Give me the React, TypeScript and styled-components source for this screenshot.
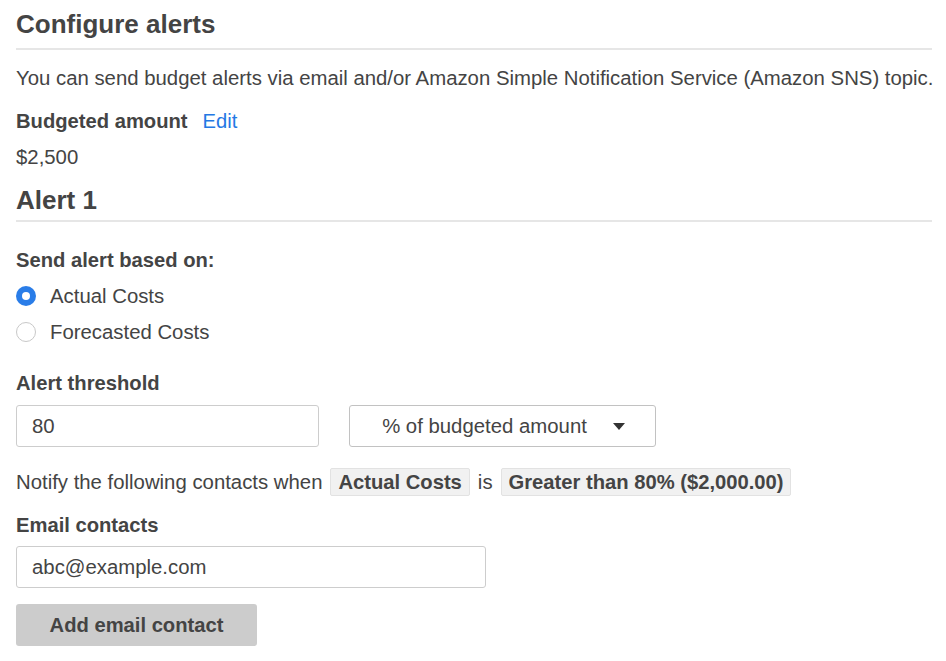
import React from "react";
import styled, { createGlobalStyle } from "styled-components";

const Global = createGlobalStyle`
  html, body { margin: 0; padding: 0; background: #fff; }
  body { font-family: "Liberation Sans", Arial, Helvetica, sans-serif; color: #444; }
  * { box-sizing: border-box; }
`;

const Page = styled.div`
  width: 946px;
  padding: 0 14px 0 16px;
  display: flex;
  flex-direction: column;
`;

const Heading = styled.h1<{ $h: number; $mt: number }>`
  margin: ${(p) => p.$mt}px 0 0;
  font-size: 26px;
  font-weight: 700;
  line-height: ${(p) => p.$h}px;
  height: ${(p) => p.$h + 2}px;
  border-bottom: 2px solid #e6e6e6;
  color: #444;
`;

const Text = styled.div<{ $mt?: number; $bold?: boolean }>`
  margin-top: ${(p) => p.$mt ?? 0}px;
  font-size: ${(p) => (p.$bold ? "20.2px" : "20.35px")};
  line-height: 36px;
  height: 36px;
  font-weight: ${(p) => (p.$bold ? 700 : 400)};
  display: flex;
  align-items: center;
  white-space: nowrap;
`;

const Link = styled.a`
  color: #2478e4;
  font-weight: 400;
  margin-left: 15px;
  text-decoration: none;
`;

const RadioRow = styled.label`
  display: flex;
  align-items: center;
  height: 36px;
  font-size: 20.35px;
  gap: 14px;
`;

const RadioDot = styled.span<{ $on?: boolean }>`
  width: 20px;
  height: 20px;
  border-radius: 50%;
  flex: none;
  position: relative;
  ${(p) =>
    p.$on
      ? `background: #2a7de8;
         &::after { content: ""; position: absolute; left: 6px; top: 6px; width: 8px; height: 8px; border-radius: 50%; background: #fff; }`
      : `border: 1.5px solid #c8c8c8; background: #fff;`}
`;

const Row = styled.div<{ $mt: number; $gap?: number }>`
  display: flex;
  margin-top: ${(p) => p.$mt}px;
  gap: ${(p) => p.$gap ?? 0}px;
`;

const Input = styled.div<{ $w: number }>`
  width: ${(p) => p.$w}px;
  height: 42px;
  border: 1px solid #cdcdcd;
  border-radius: 3px;
  padding-left: 15px;
  font-size: 20.35px;
  display: flex;
  align-items: center;
  color: #444;
`;

const Select = styled.div`
  width: 307px;
  height: 42px;
  border: 1px solid #c2c2c2;
  border-radius: 3px;
  font-size: 20.35px;
  display: flex;
  align-items: center;
  justify-content: center;
  gap: 26px;
  padding-left: 2px;
`;

const Caret = styled.span`
  width: 0;
  height: 0;
  border-left: 6px solid transparent;
  border-right: 6px solid transparent;
  border-top: 7px solid #333;
  margin-top: 1px;
`;

const Chip = styled.span`
  display: inline-flex;
  align-items: center;
  height: 28px;
  padding: 0 7px;
  margin: 0 8px;
  background: #f1f1f1;
  border: 1px solid #e2e2e2;
  border-radius: 2px;
  font-weight: 700;
  font-size: 20.2px;
`;

const Button = styled.button`
  margin-top: 16px;
  width: 241px;
  height: 42px;
  border: none;
  border-radius: 3px;
  background: #cccccc;
  color: #444;
  font-family: inherit;
  font-size: 20.2px;
  font-weight: 700;
  padding: 0;
`;

export default function App() {
  return (
    <Page>
      <Global />
      <Heading $h={48} $mt={0}>Configure alerts</Heading>
      <Text $mt={10}>
        You can send budget alerts via email and/or Amazon Simple Notification Service (Amazon SNS) topic.
      </Text>
      <Text $mt={7} $bold>
        Budgeted amount <Link>Edit</Link>
      </Text>
      <Text>$2,500</Text>
      <Heading $h={40} $mt={5}>Alert 1</Heading>
      <Text $mt={20} $bold>Send alert based on:</Text>
      <RadioRow>
        <RadioDot $on />
        Actual Costs
      </RadioRow>
      <RadioRow>
        <RadioDot />
        Forecasted Costs
      </RadioRow>
      <Text $mt={15} $bold>Alert threshold</Text>
      <Row $mt={4} $gap={30}>
        <Input $w={303}>80</Input>
        <Select>
          % of budgeted amount <Caret />
        </Select>
      </Row>
      <Text $mt={17}>
        Notify the following contacts when <Chip>Actual Costs</Chip> is <Chip>Greater than 80% ($2,000.00)</Chip>
      </Text>
      <Text $mt={7} $bold>Email contacts</Text>
      <Row $mt={3}>
        <Input $w={470}>abc@example.com</Input>
      </Row>
      <Row $mt={0}>
        <Button>Add email contact</Button>
      </Row>
    </Page>
  );
}
